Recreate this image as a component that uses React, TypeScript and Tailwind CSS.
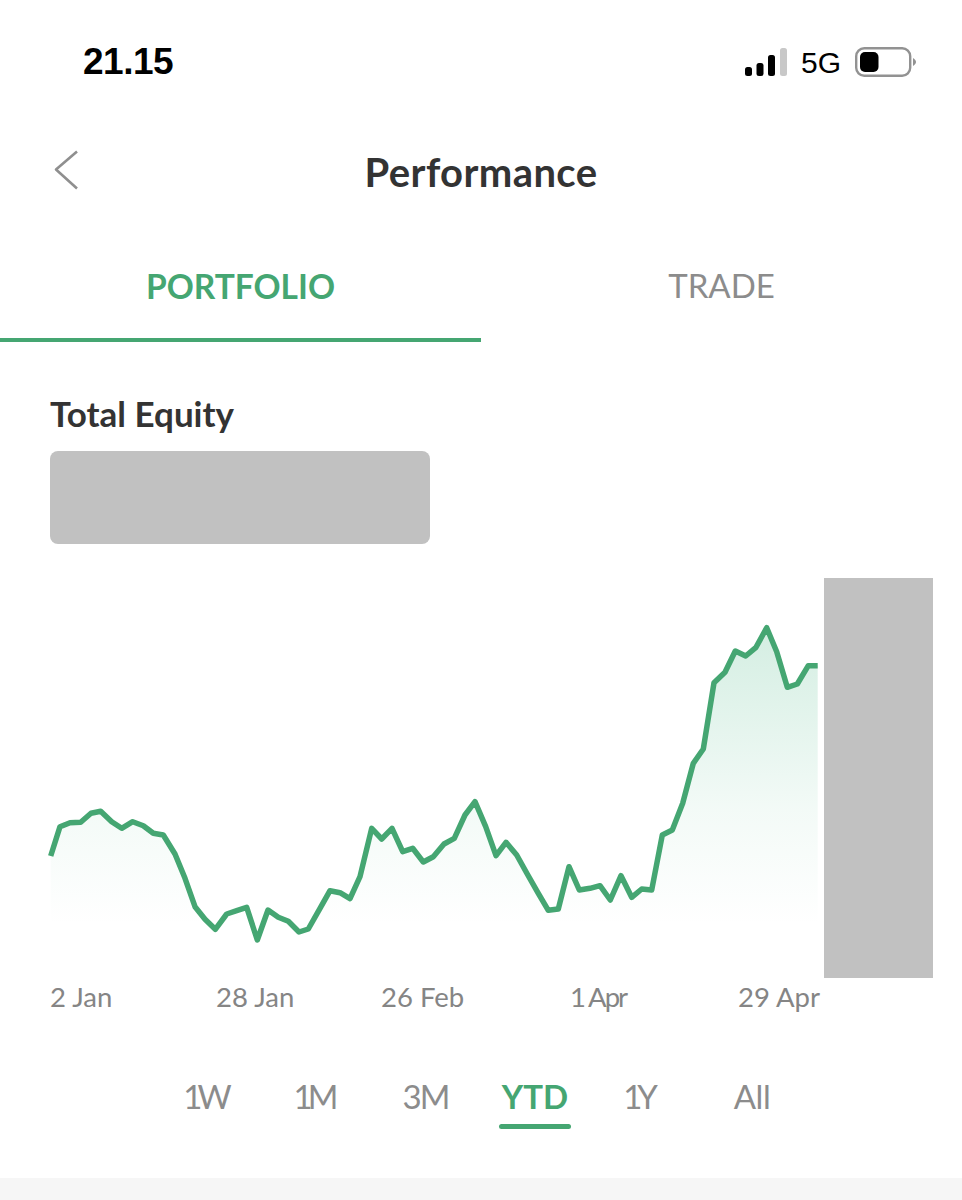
import React from 'react';

const points = '50.7,856 60,826.7 70,822.7 80.7,822.3 91,813.3 100.7,811.3 111.7,821.7 121.7,828.3 132.7,821.7 143.3,825.7 153.3,833.3 163.3,835 175,854 185,878.3 195,906.7 205,919.3 215.3,929.3 226.7,914 236.7,910.7 246.7,907.3 257.3,940 268,910 278.3,917.3 288.3,921.3 299,932 308.3,929 320,908.3 330,890.7 340,892.7 350,898.7 360,876.7 371.7,828.3 381.7,839 392,828.3 402.7,851.7 412.7,848.3 423.3,862 433.3,856.7 444,844 454.3,838.3 465,815 475,801.7 485.7,826.7 496,855.7 506,842.3 516.7,855 526.7,873 538.3,893.3 548.3,910.3 558.3,909 569,866.7 579.3,890 590,888.3 600,885.7 610.3,900 621,875.7 631.7,897.3 641.7,889 651.7,890 662.3,835 672.3,830 682.7,803.3 693.3,763.3 703.3,749 714,682.7 725,672.3 735.3,651 745.7,656 756,647.3 766.7,627.7 776.7,651.7 787.3,687.3 797.3,684 808.3,665.7 817.7,665.7';

const dates = [
  { label: '2 Jan', cls: 'w-[64px]' },
  { label: '28 Jan', cls: 'ml-[102px] w-[80px]' },
  { label: '26 Feb', cls: 'ml-[85px] w-[84px]' },
  { label: '1 Apr', cls: 'ml-[105px] w-[58px] tracking-[-2px]' },
  { label: '29 Apr', cls: 'ml-[110px] w-[80px]' },
];

const ranges = [
  { label: '1W', cls: 'w-[38px] ml-[186px] tracking-[-5px]' },
  { label: '1M', cls: 'w-[37px] ml-[71px] tracking-[-5px]' },
  { label: '3M', cls: 'w-[43px] ml-[72px] tracking-[-2px]' },
  { label: 'YTD', cls: 'w-[72px] ml-[52px]', active: true },
  { label: '1Y', cls: 'w-[30px] ml-[52px] tracking-[-5px]' },
  { label: 'All', cls: 'w-[40px] ml-[79px] tracking-[-0.5px]' },
];

function StatusBar() {
  return (
    <div className="flex items-center justify-between h-[124px] pl-[83px] pr-[45px]">
      <span className="text-[37px] font-bold text-black font-['Liberation_Sans',sans-serif] tracking-[-0.5px]">21.15</span>
      <div className="flex items-center">
        <svg width="42" height="28" viewBox="0 0 42 28">
          <rect x="0" y="19" width="7" height="9" rx="2.5" fill="#000" />
          <rect x="11.5" y="15" width="7" height="13" rx="2.5" fill="#000" />
          <rect x="23" y="7" width="7" height="21" rx="2.5" fill="#000" />
          <rect x="35" y="0" width="7" height="28" rx="2.5" fill="#c8c8c8" />
        </svg>
        <span className="ml-[14px] text-[30px] text-black font-['Liberation_Sans',sans-serif]">5G</span>
        <svg className="ml-[14px]" width="62" height="30" viewBox="0 0 62 30">
          <rect x="1.2" y="1.2" width="54" height="27.5" rx="8" fill="none" stroke="#929292" strokeWidth="2.4" />
          <rect x="5" y="5" width="18.5" height="20" rx="5" fill="#000" />
          <path d="M58 11 C60 12 61 14 61 15 C61 16 60 18 58 19 Z" fill="#929292" />
        </svg>
      </div>
    </div>
  );
}

function Header() {
  return (
    <div className="relative flex items-center justify-center h-[96px]">
      <svg className="absolute left-[53px] top-[25px]" width="26" height="42" viewBox="0 0 26 42">
        <path d="M24 2.5 L3 20.5 L24 39.5" fill="none" stroke="#8f8f8f" strokeWidth="2.6" strokeLinejoin="round" />
      </svg>
      <h1 className="text-[40px] tracking-[0.4px] font-bold text-[#333333] font-['Lato',sans-serif] leading-none">Performance</h1>
    </div>
  );
}

function Tabs() {
  return (
    <div className="flex h-[102px] mt-[20px] font-['Lato',sans-serif] text-[33px]">
      <div className="w-1/2 flex items-center justify-center border-b-[4px] border-[#45a672] font-bold text-[33.5px] text-[#45a672] pb-[6px]">PORTFOLIO</div>
      <div className="w-1/2 flex items-center justify-center border-b-[4px] border-transparent text-[#8c8c8c] pb-[6px]">TRADE</div>
    </div>
  );
}

function Chart() {
  return (
    <div className="flex pl-[50px]">
      <svg className="overflow-visible" width="768" height="400" viewBox="50 578 768 400">
        <defs>
          <linearGradient id="equityFill" gradientUnits="userSpaceOnUse" x1="0" y1="628" x2="0" y2="925">
            <stop offset="0" stopColor="#3cb27c" stopOpacity="0.22" />
            <stop offset="0.62" stopColor="#3cb27c" stopOpacity="0.06" />
            <stop offset="1" stopColor="#3cb27c" stopOpacity="0" />
          </linearGradient>
        </defs>
        <polygon points={`${points} 817.7,940 50.7,940`} fill="url(#equityFill)" />
        <polyline points={points} fill="none" stroke="#45a672" strokeWidth="5.5" strokeLinejoin="round" />
      </svg>
      <div className="ml-[6px] w-[109px] h-[400px] bg-[#c1c1c1]" />
    </div>
  );
}

export default function App() {
  return (
    <div className="w-[962px] h-[1200px] bg-white flex flex-col overflow-hidden">
      <StatusBar />
      <Header />
      <Tabs />

      <h2 className="mt-[52px] pl-[50px] text-[35px] leading-[38px] font-bold text-[#333333] font-['Lato',sans-serif]">Total Equity</h2>
      <div className="mt-[19px] ml-[50px] w-[380px] h-[93px] rounded-[8px] bg-[#c1c1c1]" />

      <div className="mt-[34px]">
        <Chart />
      </div>

      <div className="flex pl-[50px] mt-[1px] text-[27.5px] leading-[36px] text-[#858585] font-['Lato',sans-serif]">
        {dates.map(d => (
          <span key={d.label} className={`${d.cls} shrink-0 whitespace-nowrap`}>{d.label}</span>
        ))}
      </div>

      <div className="flex mt-[61px] text-[33px] leading-[40px] font-['Lato',sans-serif]">
        {ranges.map(r => (
          <div key={r.label} className={`${r.cls} shrink-0 flex flex-col items-center`}>
            <span className={r.active ? 'font-bold text-[#45a672] whitespace-nowrap' : 'text-[#8c8c8c] whitespace-nowrap'}>{r.label}</span>
            {r.active && <div className="mt-[8px] w-[72px] h-[5px] rounded-full bg-[#45a672]" />}
          </div>
        ))}
      </div>

      <div className="mt-auto h-[22px] bg-[#f6f6f6]" />
    </div>
  );
}
